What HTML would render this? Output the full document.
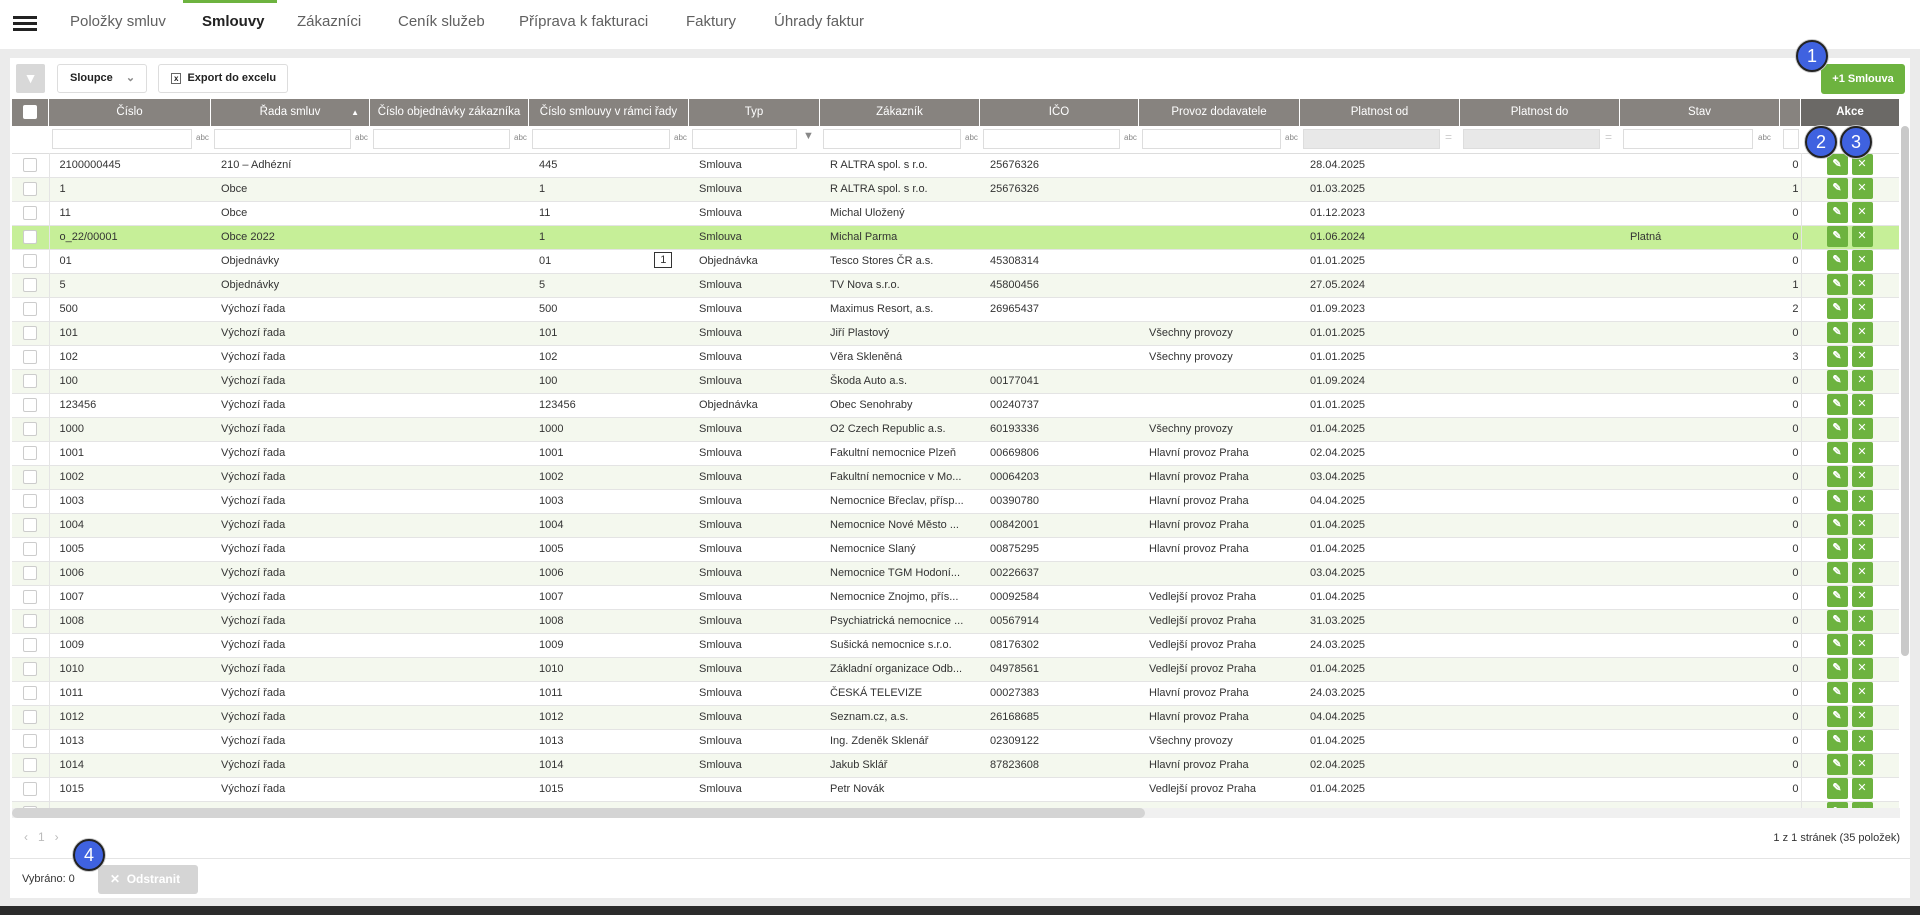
<!DOCTYPE html>
<html><head><meta charset="utf-8"><style>
*{box-sizing:border-box;margin:0;padding:0}
body{width:1920px;height:915px;background:#ebebeb;font-family:"Liberation Sans",sans-serif;position:relative;overflow:hidden;color:#333}
.nav{position:absolute;left:0;top:0;width:1920px;height:49px;background:#fff}
.nav .t{position:absolute;top:13px;font-size:15px;color:#606060}
.ham{position:absolute;left:13px;top:16px;width:24px;height:3px;background:#222;box-shadow:0 6px 0 #222,0 12px 0 #222}
.card{position:absolute;left:10px;top:58px;width:1900px;height:840px;background:#fff}
.btn{position:absolute;top:6px;height:29px;border:1px solid #ddd;border-radius:3px;background:#fff;font-size:11px;line-height:27px;color:#222}
.abs{position:absolute}
table{border-collapse:collapse;table-layout:fixed;font-size:11px}
td{height:24px;white-space:nowrap;overflow:hidden;padding-left:10px;border-bottom:1px solid #e4e4e4}
tr:nth-child(even) td{background:#f4f8ee}
tr.hl td{background:#c6ef98}
td.c{padding-left:0;border-right:1px solid #e4e4e4}
td.c i{display:block;width:14px;height:14px;border:1px solid #ccc;border-radius:2px;background:#fff;margin:0 auto}
td.n{text-align:right;padding-right:2px;padding-left:0;border-right:1px solid #e4e4e4}
td.a{padding-left:0}
td.a b,td.a s{position:absolute;margin-top:-11px;width:21px;height:21px;background:#6db33f;border-radius:2px;color:#fff;font-size:11px;text-align:center;line-height:21px;text-decoration:none}
td.a b{margin-left:25px}td.a s{margin-left:50px}
.hd{position:absolute;top:41px;height:27px;background:#87837f;color:#fff;font-size:11.5px;text-align:center;line-height:27px;border-right:1px solid #fff}
.fi{position:absolute;top:71px;height:20px;border:1px solid #ddd;background:#fff}
.ab{position:absolute;top:75px;font-size:8px;color:#888}
.circ{position:absolute;width:32px;height:32px;border-radius:50%;background:#3f62e0;border:2px solid #222;box-shadow:0 0 0 1px #ccc;color:#fff;font-size:18px;text-align:center;line-height:28px}
</style></head><body>
<div class="nav">
<div class="ham"></div>
<div class="abs" style="left:183px;top:0;width:94px;height:3px;background:#6db33f"></div>
<span class="t" style="left:70px">Položky smluv</span>
<span class="t" style="left:202px;color:#222;font-weight:bold">Smlouvy</span>
<span class="t" style="left:297px">Zákazníci</span>
<span class="t" style="left:398px">Ceník služeb</span>
<span class="t" style="left:519px">Příprava k fakturaci</span>
<span class="t" style="left:686px">Faktury</span>
<span class="t" style="left:774px">Úhrady faktur</span>
</div>
<div class="card">
<div class="abs" style="left:6px;top:6px;width:29px;height:29px;background:#d8d8d8;border-radius:2px;color:#fff;text-align:center;line-height:29px;font-size:14px">▼</div>
<div class="btn" style="left:47px;width:90px;padding-left:12px;font-weight:bold">Sloupce <span style="color:#888;margin-left:10px">⌄</span></div>
<div class="btn" style="left:148px;width:130px;padding-left:12px;font-weight:bold"><span style="border:1px solid #666;font-size:8px;padding:0 2px;margin-right:6px">x</span>Export do excelu</div>
<div class="abs" style="left:1811px;top:6px;width:84px;height:30px;background:#6db33f;border-radius:3px;color:#fff;font-size:11px;font-weight:bold;text-align:center;line-height:30px">+1 Smlouva</div>

<div class="hd" style="left:2px;width:37px"><i style="display:inline-block;width:14px;height:14px;background:#fff;border-radius:2px;vertical-align:middle"></i></div>
<div class="hd" style="left:39px;width:162px">Číslo</div>
<div class="hd" style="left:201px;width:159px">Řada smluv <span style="position:absolute;right:10px;font-size:8px">▲</span></div>
<div class="hd" style="left:360px;width:159px">Číslo objednávky zákazníka</div>
<div class="hd" style="left:519px;width:160px">Číslo smlouvy v rámci řady</div>
<div class="hd" style="left:679px;width:131px">Typ</div>
<div class="hd" style="left:810px;width:160px">Zákazník</div>
<div class="hd" style="left:970px;width:159px">IČO</div>
<div class="hd" style="left:1129px;width:161px">Provoz dodavatele</div>
<div class="hd" style="left:1290px;width:160px">Platnost od</div>
<div class="hd" style="left:1450px;width:160px">Platnost do</div>
<div class="hd" style="left:1610px;width:160px">Stav</div>
<div class="hd" style="left:1770px;width:21px"></div>
<div class="hd" style="left:1791px;width:98px;background:#6b6966;font-weight:bold;border:0">Akce</div>

<div class="fi" style="left:42px;width:140px"></div><span class="ab" style="left:186px">abc</span>
<div class="fi" style="left:204px;width:137px"></div><span class="ab" style="left:345px">abc</span>
<div class="fi" style="left:363px;width:137px"></div><span class="ab" style="left:504px">abc</span>
<div class="fi" style="left:522px;width:138px"></div><span class="ab" style="left:664px">abc</span>
<div class="fi" style="left:682px;width:105px"></div><span class="ab" style="left:793px;font-size:11px;top:72px">▼</span>
<div class="fi" style="left:813px;width:138px"></div><span class="ab" style="left:955px">abc</span>
<div class="fi" style="left:973px;width:137px"></div><span class="ab" style="left:1114px">abc</span>
<div class="fi" style="left:1132px;width:139px"></div><span class="ab" style="left:1275px">abc</span>
<div class="fi" style="left:1293px;width:137px;background:#e8e8e8"></div><span class="ab" style="left:1435px;font-size:12px;top:72px;color:#ccc">=</span>
<div class="fi" style="left:1453px;width:137px;background:#e8e8e8"></div><span class="ab" style="left:1595px;font-size:12px;top:72px;color:#ccc">=</span>
<div class="fi" style="left:1613px;width:130px"></div><span class="ab" style="left:1748px">abc</span>
<div class="fi" style="left:1773px;width:16px"></div>
<div class="abs" style="left:2px;top:95px;width:1887px;height:1px;background:#ddd"></div>

<div class="abs" style="left:2px;top:95px;width:1887px;height:655px;overflow:hidden">
<table style="width:1887px">
<colgroup><col style="width:37px"><col style="width:162px"><col style="width:159px"><col style="width:159px"><col style="width:160px"><col style="width:131px"><col style="width:160px"><col style="width:159px"><col style="width:161px"><col style="width:160px"><col style="width:160px"><col style="width:160px"><col style="width:21px"><col style="width:98px"></colgroup>
<tr><td class="c"><i></i></td><td>2100000445</td><td>210 – Adhézní</td><td></td><td>445</td><td>Smlouva</td><td>R ALTRA spol. s r.o.</td><td>25676326</td><td></td><td>28.04.2025</td><td></td><td></td><td class="n">0</td><td class="a"><b>✎</b><s>✕</s></td></tr>
<tr><td class="c"><i></i></td><td>1</td><td>Obce</td><td></td><td>1</td><td>Smlouva</td><td>R ALTRA spol. s r.o.</td><td>25676326</td><td></td><td>01.03.2025</td><td></td><td></td><td class="n">1</td><td class="a"><b>✎</b><s>✕</s></td></tr>
<tr><td class="c"><i></i></td><td>11</td><td>Obce</td><td></td><td>11</td><td>Smlouva</td><td>Michal Uložený</td><td></td><td></td><td>01.12.2023</td><td></td><td></td><td class="n">0</td><td class="a"><b>✎</b><s>✕</s></td></tr>
<tr class="hl"><td class="c"><i></i></td><td>o_22/00001</td><td>Obce 2022</td><td></td><td>1</td><td>Smlouva</td><td>Michal Parma</td><td></td><td></td><td>01.06.2024</td><td></td><td>Platná</td><td class="n">0</td><td class="a"><b>✎</b><s>✕</s></td></tr>
<tr><td class="c"><i></i></td><td>01</td><td>Objednávky</td><td></td><td>01<span style="position:absolute;margin-left:103px;margin-top:-3px;border:1px solid #333;padding:1px 5px;background:#fff">1</span></td><td>Objednávka</td><td>Tesco Stores ČR a.s.</td><td>45308314</td><td></td><td>01.01.2025</td><td></td><td></td><td class="n">0</td><td class="a"><b>✎</b><s>✕</s></td></tr>
<tr><td class="c"><i></i></td><td>5</td><td>Objednávky</td><td></td><td>5</td><td>Smlouva</td><td>TV Nova s.r.o.</td><td>45800456</td><td></td><td>27.05.2024</td><td></td><td></td><td class="n">1</td><td class="a"><b>✎</b><s>✕</s></td></tr>
<tr><td class="c"><i></i></td><td>500</td><td>Výchozí řada</td><td></td><td>500</td><td>Smlouva</td><td>Maximus Resort, a.s.</td><td>26965437</td><td></td><td>01.09.2023</td><td></td><td></td><td class="n">2</td><td class="a"><b>✎</b><s>✕</s></td></tr>
<tr><td class="c"><i></i></td><td>101</td><td>Výchozí řada</td><td></td><td>101</td><td>Smlouva</td><td>Jiří Plastový</td><td></td><td>Všechny provozy</td><td>01.01.2025</td><td></td><td></td><td class="n">0</td><td class="a"><b>✎</b><s>✕</s></td></tr>
<tr><td class="c"><i></i></td><td>102</td><td>Výchozí řada</td><td></td><td>102</td><td>Smlouva</td><td>Věra Skleněná</td><td></td><td>Všechny provozy</td><td>01.01.2025</td><td></td><td></td><td class="n">3</td><td class="a"><b>✎</b><s>✕</s></td></tr>
<tr><td class="c"><i></i></td><td>100</td><td>Výchozí řada</td><td></td><td>100</td><td>Smlouva</td><td>Škoda Auto a.s.</td><td>00177041</td><td></td><td>01.09.2024</td><td></td><td></td><td class="n">0</td><td class="a"><b>✎</b><s>✕</s></td></tr>
<tr><td class="c"><i></i></td><td>123456</td><td>Výchozí řada</td><td></td><td>123456</td><td>Objednávka</td><td>Obec Senohraby</td><td>00240737</td><td></td><td>01.01.2025</td><td></td><td></td><td class="n">0</td><td class="a"><b>✎</b><s>✕</s></td></tr>
<tr><td class="c"><i></i></td><td>1000</td><td>Výchozí řada</td><td></td><td>1000</td><td>Smlouva</td><td>O2 Czech Republic a.s.</td><td>60193336</td><td>Všechny provozy</td><td>01.04.2025</td><td></td><td></td><td class="n">0</td><td class="a"><b>✎</b><s>✕</s></td></tr>
<tr><td class="c"><i></i></td><td>1001</td><td>Výchozí řada</td><td></td><td>1001</td><td>Smlouva</td><td>Fakultní nemocnice Plzeň</td><td>00669806</td><td>Hlavní provoz Praha</td><td>02.04.2025</td><td></td><td></td><td class="n">0</td><td class="a"><b>✎</b><s>✕</s></td></tr>
<tr><td class="c"><i></i></td><td>1002</td><td>Výchozí řada</td><td></td><td>1002</td><td>Smlouva</td><td>Fakultní nemocnice v Mo...</td><td>00064203</td><td>Hlavní provoz Praha</td><td>03.04.2025</td><td></td><td></td><td class="n">0</td><td class="a"><b>✎</b><s>✕</s></td></tr>
<tr><td class="c"><i></i></td><td>1003</td><td>Výchozí řada</td><td></td><td>1003</td><td>Smlouva</td><td>Nemocnice Břeclav, přísp...</td><td>00390780</td><td>Hlavní provoz Praha</td><td>04.04.2025</td><td></td><td></td><td class="n">0</td><td class="a"><b>✎</b><s>✕</s></td></tr>
<tr><td class="c"><i></i></td><td>1004</td><td>Výchozí řada</td><td></td><td>1004</td><td>Smlouva</td><td>Nemocnice Nové Město ...</td><td>00842001</td><td>Hlavní provoz Praha</td><td>01.04.2025</td><td></td><td></td><td class="n">0</td><td class="a"><b>✎</b><s>✕</s></td></tr>
<tr><td class="c"><i></i></td><td>1005</td><td>Výchozí řada</td><td></td><td>1005</td><td>Smlouva</td><td>Nemocnice Slaný</td><td>00875295</td><td>Hlavní provoz Praha</td><td>01.04.2025</td><td></td><td></td><td class="n">0</td><td class="a"><b>✎</b><s>✕</s></td></tr>
<tr><td class="c"><i></i></td><td>1006</td><td>Výchozí řada</td><td></td><td>1006</td><td>Smlouva</td><td>Nemocnice TGM Hodoní...</td><td>00226637</td><td></td><td>03.04.2025</td><td></td><td></td><td class="n">0</td><td class="a"><b>✎</b><s>✕</s></td></tr>
<tr><td class="c"><i></i></td><td>1007</td><td>Výchozí řada</td><td></td><td>1007</td><td>Smlouva</td><td>Nemocnice Znojmo, přís...</td><td>00092584</td><td>Vedlejší provoz Praha</td><td>01.04.2025</td><td></td><td></td><td class="n">0</td><td class="a"><b>✎</b><s>✕</s></td></tr>
<tr><td class="c"><i></i></td><td>1008</td><td>Výchozí řada</td><td></td><td>1008</td><td>Smlouva</td><td>Psychiatrická nemocnice ...</td><td>00567914</td><td>Vedlejší provoz Praha</td><td>31.03.2025</td><td></td><td></td><td class="n">0</td><td class="a"><b>✎</b><s>✕</s></td></tr>
<tr><td class="c"><i></i></td><td>1009</td><td>Výchozí řada</td><td></td><td>1009</td><td>Smlouva</td><td>Sušická nemocnice s.r.o.</td><td>08176302</td><td>Vedlejší provoz Praha</td><td>24.03.2025</td><td></td><td></td><td class="n">0</td><td class="a"><b>✎</b><s>✕</s></td></tr>
<tr><td class="c"><i></i></td><td>1010</td><td>Výchozí řada</td><td></td><td>1010</td><td>Smlouva</td><td>Základní organizace Odb...</td><td>04978561</td><td>Vedlejší provoz Praha</td><td>01.04.2025</td><td></td><td></td><td class="n">0</td><td class="a"><b>✎</b><s>✕</s></td></tr>
<tr><td class="c"><i></i></td><td>1011</td><td>Výchozí řada</td><td></td><td>1011</td><td>Smlouva</td><td>ČESKÁ TELEVIZE</td><td>00027383</td><td>Hlavní provoz Praha</td><td>24.03.2025</td><td></td><td></td><td class="n">0</td><td class="a"><b>✎</b><s>✕</s></td></tr>
<tr><td class="c"><i></i></td><td>1012</td><td>Výchozí řada</td><td></td><td>1012</td><td>Smlouva</td><td>Seznam.cz, a.s.</td><td>26168685</td><td>Hlavní provoz Praha</td><td>04.04.2025</td><td></td><td></td><td class="n">0</td><td class="a"><b>✎</b><s>✕</s></td></tr>
<tr><td class="c"><i></i></td><td>1013</td><td>Výchozí řada</td><td></td><td>1013</td><td>Smlouva</td><td>Ing. Zdeněk Sklenář</td><td>02309122</td><td>Všechny provozy</td><td>01.04.2025</td><td></td><td></td><td class="n">0</td><td class="a"><b>✎</b><s>✕</s></td></tr>
<tr><td class="c"><i></i></td><td>1014</td><td>Výchozí řada</td><td></td><td>1014</td><td>Smlouva</td><td>Jakub Sklář</td><td>87823608</td><td>Hlavní provoz Praha</td><td>02.04.2025</td><td></td><td></td><td class="n">0</td><td class="a"><b>✎</b><s>✕</s></td></tr>
<tr><td class="c"><i></i></td><td>1015</td><td>Výchozí řada</td><td></td><td>1015</td><td>Smlouva</td><td>Petr Novák</td><td></td><td>Vedlejší provoz Praha</td><td>01.04.2025</td><td></td><td></td><td class="n">0</td><td class="a"><b>✎</b><s>✕</s></td></tr>
<tr><td class="c"><i></i></td><td></td><td></td><td></td><td></td><td></td><td></td><td></td><td></td><td></td><td></td><td></td><td class="n"></td><td class="a"><b>✎</b><s>✕</s></td></tr>
</table>
</div>
<div class="abs" style="left:1891px;top:68px;width:8px;height:530px;background:#c9c9c9;border-radius:4px"></div>
<div class="abs" style="left:2px;top:750px;width:1888px;height:10px;background:#f0f0f0"></div>
<div class="abs" style="left:2px;top:750px;width:1133px;height:10px;background:#d4d4d4;border-radius:5px"></div>
<div class="abs" style="left:14px;top:772px;font-size:12px;color:#bbb">‹ &nbsp; 1 &nbsp; ›</div>
<div class="abs" style="right:10px;top:774px;font-size:11px;color:#333">1 z 1 stránek (35 položek)</div>
<div class="abs" style="left:0;top:800px;width:1900px;height:1px;background:#e4e4e4"></div>
<div class="abs" style="left:12px;top:815px;font-size:11px;color:#333">Vybráno: 0</div>
<div class="abs" style="left:88px;top:807px;width:100px;height:29px;background:#d5d5d5;border-radius:3px;color:#fff;font-size:12px;font-weight:bold;line-height:29px;padding-left:12px">✕ &nbsp;Odstranit</div>
</div>
<div class="abs" style="left:0;top:906px;width:1920px;height:9px;background:#2b2b2b"></div>
<div class="circ" style="left:1796px;top:40px">1</div>
<div class="circ" style="left:1805px;top:126px">2</div>
<div class="circ" style="left:1840px;top:126px">3</div>
<div class="circ" style="left:73px;top:839px">4</div>
</body></html>
